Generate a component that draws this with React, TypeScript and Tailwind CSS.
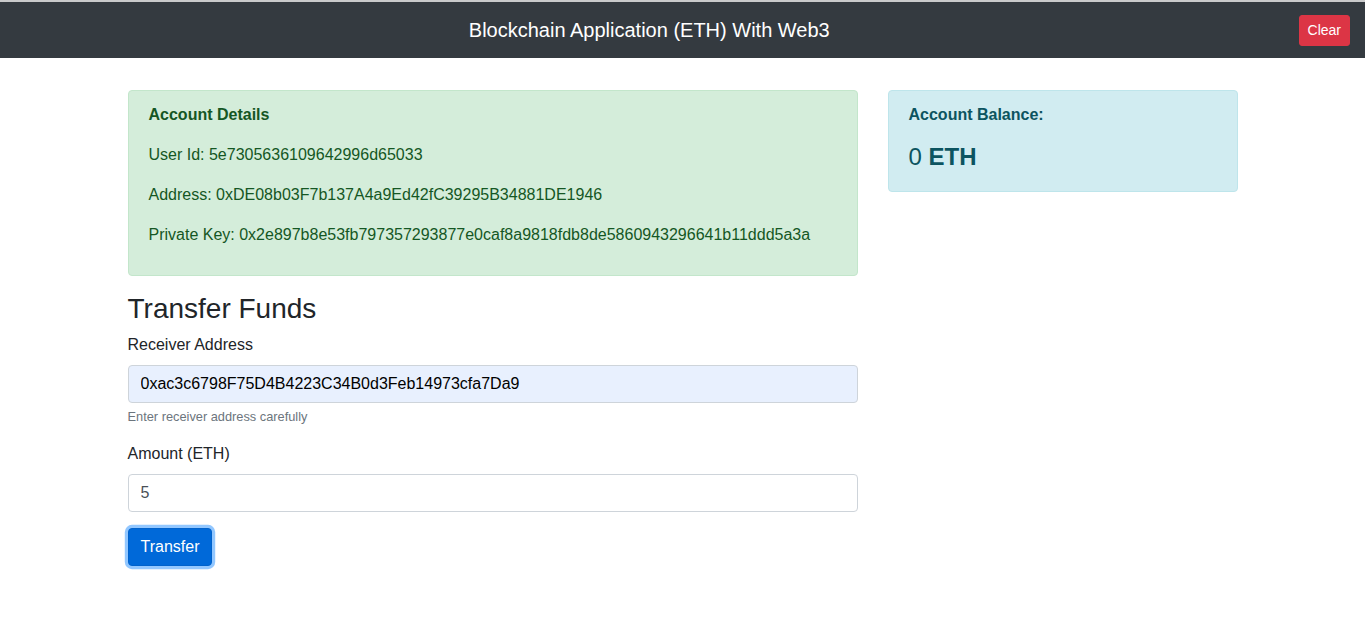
const font = { fontFamily: '"Liberation Sans", Arial, sans-serif' };

const Navbar = () => (
  <div>
    <div className="h-[2px] bg-[#c9cacb]" />
    <div className="flex items-center h-14 bg-[#343a40] pl-4 pr-[15px]">
      <div className="flex-1 text-center pr-[16px] text-white text-[20px] leading-[30px]">
        Blockchain Application (ETH) With Web3
      </div>
      <button className="bg-[#dc3545] text-white text-[14px] leading-[21px] px-2 py-1 rounded-[3px] border border-[#dc3545]">
        Clear
      </button>
    </div>
  </div>
);

const AccountDetails = () => (
  <div className="bg-[#d4edda] border border-[#c3e6cb] text-[#155724] rounded px-5 py-3 mb-4">
    <div className="font-bold mb-4">Account Details</div>
    <p className="mb-4">User Id: 5e7305636109642996d65033</p>
    <p className="mb-4">Address: 0xDE08b03F7b137A4a9Ed42fC39295B34881DE1946</p>
    <p className="mb-4">
      Private Key: 0x2e897b8e53fb797357293877e0caf8a9818fdb8de5860943296641b11ddd5a3a
    </p>
  </div>
);

const Balance = () => (
  <div className="bg-[#d1ecf1] border border-[#bee5eb] text-[#0c5460] rounded px-5 py-3">
    <div className="font-bold mb-4">Account Balance:</div>
    <div className="text-[24px] leading-[28px] mb-[8px]">
      0 <b>ETH</b>
    </div>
  </div>
);

const TransferForm = () => (
  <div>
    <h3 className="text-[28px] leading-[33px] mb-[8px]">Transfer Funds</h3>
    <div className="mb-4">
      <label className="block mb-2">Receiver Address</label>
      <input
        className="block w-full h-[38px] px-3 py-1.5 border border-[#ced4da] rounded bg-[#e8f0fe] text-black outline-none"
        style={font}
        defaultValue="0xac3c6798F75D4B4223C34B0d3Feb14973cfa7Da9"
      />
      <div className="mt-1 text-[12.8px] leading-[19px] text-[#6c757d]">
        Enter receiver address carefully
      </div>
    </div>
    <div className="mb-4">
      <label className="block mb-2">Amount (ETH)</label>
      <input
        className="block w-full h-[38px] px-3 py-1.5 border border-[#ced4da] rounded bg-white text-[#495057] outline-none"
        style={font}
        defaultValue="5"
      />
    </div>
    <button className="bg-[#0069d9] border border-[#0062cc] text-white px-3 py-1.5 rounded shadow-[0_0_0_0.2rem_rgba(38,143,255,0.5)]">
      Transfer
    </button>
  </div>
);

export default function App() {
  return (
    <div className="min-h-screen bg-white text-[#212529] text-base leading-normal" style={font}>
      <Navbar />
      <div className="w-[1110px] mx-auto pt-8 flex gap-[30px]">
        <div className="w-[730px]">
          <AccountDetails />
          <TransferForm />
        </div>
        <div className="w-[350px]">
          <Balance />
        </div>
      </div>
    </div>
  );
}
